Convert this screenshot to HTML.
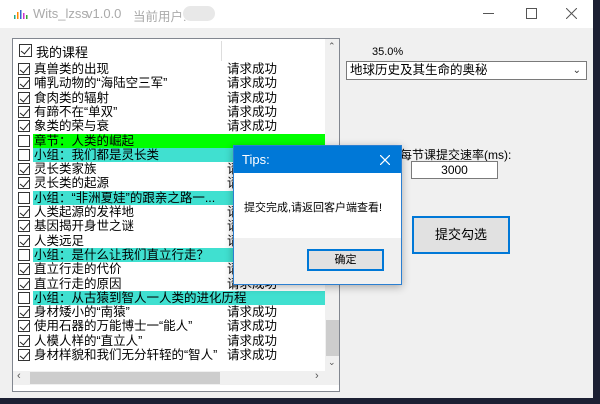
<!DOCTYPE html><html><head><meta charset="utf-8"><style>
*{margin:0;padding:0;box-sizing:border-box}
body{width:600px;height:404px;background:#1c2033;position:relative;overflow:hidden;font-family:"Liberation Sans","Noto Sans CJK SC",sans-serif;font-size:12px;color:#000}
.win{position:absolute;left:0;top:0;width:593px;height:398px;background:#f0f0f0}
.tb{position:absolute;left:0;top:0;width:593px;height:28px;background:#fff}
.abs{position:absolute;white-space:nowrap}
.list{position:absolute;left:12px;top:38px;width:328px;height:354px;border:1px solid #828790;background:#fff}
.cb{position:absolute;left:5px;width:12px;height:12px;border:1px solid #333;background:#fff}
.cb.c::after{content:"";position:absolute;left:3px;top:0px;width:4px;height:8px;border:solid #222;border-width:0 1.5px 1.5px 0;transform:rotate(40deg)}
.bar{position:absolute;left:20px;width:292px;height:14px;line-height:14px;padding-left:1px;font-size:12.5px}
.st{position:absolute;left:214px;font-size:12.5px;line-height:14px}
</style></head><body>
<div class="win">
<div class="tb">
 <svg class="abs" style="left:14px;top:10px" width="14" height="10"><rect x="0" y="5" width="1.5" height="4" fill="#2a8"/><rect x="3" y="2" width="1.5" height="7" fill="#f80"/><rect x="6" y="0" width="1.5" height="9" fill="#36c"/><rect x="9" y="3" width="1.5" height="6" fill="#c3c"/><rect x="12" y="5" width="1.5" height="4" fill="#3a3"/></svg>
 <div class="abs" style="left:33px;top:6px;font-size:13px;color:#aaa">Wits_lzss</div>
 <div class="abs" style="left:86px;top:6px;font-size:13px;color:#aaa">v1.0.0</div>
 <div class="abs" style="left:133px;top:6px;font-size:12.5px;color:#aaa">当前用户:</div>
 <div class="abs" style="left:183px;top:6px;width:32px;height:15px;border-radius:8px;background:#e8e8e8"></div>
 <div class="abs" style="left:483px;top:13px;width:11px;height:1px;background:#555"></div>
 <div class="abs" style="left:526px;top:8px;width:11px;height:11px;border:1px solid #555"></div>
 <svg class="abs" style="left:566px;top:8px" width="11" height="11"><path d="M0 0L11 11M11 0L0 11" stroke="#555" stroke-width="1"/></svg>
</div>
<div class="list">
 <div class="cb c" style="left:6px;top:5px;width:13px;height:13px"></div>
 <div class="abs" style="left:23px;top:3px;font-size:13px">我的课程</div>
 <div class="abs" style="left:208px;top:2px;width:1px;height:20px;background:#ddd"></div>
 <div id="rows"></div>
 <div class="abs" style="left:312px;top:0;width:14px;height:332px;background:#f0f0f0"></div>
 <div class="abs" style="left:315px;top:2px;font-size:9px;color:#555">⌃</div>
 <div class="abs" style="left:313px;top:281px;width:13px;height:36px;background:#cdcdcd"></div>
 <div class="abs" style="left:315px;top:318px;font-size:9px;color:#555">⌄</div>
 <div class="abs" style="left:0;top:332px;width:326px;height:14px;background:#f0f0f0"></div>
 <div class="abs" style="left:17px;top:333px;width:190px;height:12px;background:#cdcdcd"></div>
 <div class="abs" style="left:4px;top:331px;font-size:11px;color:#555">‹</div>
 <div class="abs" style="left:302px;top:331px;font-size:11px;color:#555">›</div>
</div>
<div class="abs" style="left:372px;top:46px;font-size:11px">35.0%</div>
<div class="abs" style="left:346px;top:61px;width:241px;height:19px;border:1px solid #7a7a7a;background:#fff;font-size:12.5px;line-height:17px;padding-left:3px">地球历史及其生命的奥秘<span style="position:absolute;right:5px;top:0;font-size:10px;color:#333">⌄</span></div>
<div class="abs" style="left:400px;top:146px;font-size:12px">每节课提交速率(ms):</div>
<div class="abs" style="left:411px;top:161px;width:87px;height:18px;border:1px solid #7a7a7a;background:#fff;text-align:center;font-size:12px;line-height:16px">3000</div>
<div class="abs" style="left:412px;top:216px;width:98px;height:38px;border:2px solid #0078d7;background:#e1e1e1;text-align:center;line-height:34px;font-size:13px">提交勾选</div>
</div>
<div class="abs" style="left:233px;top:145px;width:169px;height:140px;border:1px solid #2b7fd1;background:#fff;box-shadow:0 2px 8px rgba(0,0,0,.3)">
 <div style="height:27px;background:#0078d7;color:#fff;font-size:13px;line-height:27px;padding-left:8px;position:relative">Tips:<svg style="position:absolute;right:11px;top:9px" width="10" height="10"><path d="M0 0L10 10M10 0L0 10" stroke="#fff" stroke-width="1.2"/></svg></div>
 <div class="abs" style="left:10px;top:53px;font-size:11px">提交完成,请返回客户端查看!</div>
 <div class="abs" style="left:0;top:92px;width:167px;height:46px;background:#f0f0f0"></div>
 <div class="abs" style="left:73px;top:103px;width:77px;height:22px;border:2px solid #0078d7;background:#e1e1e1;text-align:center;line-height:18px;font-size:11px">确定</div>
</div>
<script>
var R=[["c","真兽类的出现",1],["c","哺乳动物的“海陆空三军”",1],["c","食肉类的辐射",1],["c","有蹄不在“单双”",1],["c","象类的荣与衰",1],["g","章节：人类的崛起"],["t","小组：我们都是灵长类"],["c","灵长类家族",1],["c","灵长类的起源",1],["t","小组：“非洲夏娃”的跟亲之路一..."],["c","人类起源的发祥地",1],["c","基因揭开身世之谜",1],["c","人类远足",1],["t","小组：是什么让我们直立行走？"],["c","直立行走的代价",1],["c","直立行走的原因",1],["t","小组：从古猿到智人一人类的进化历程"],["c","身材矮小的“南猿”",1],["c","使用石器的万能博士一“能人”",1],["c","人模人样的“直立人”",1],["c","身材样貌和我们无分轩轾的“智人”",1]];
var h="";R.forEach(function(r,i){var y=23+i*14.3;
if(r[0]=="c"){h+='<div class="cb c" style="top:'+(y+1)+'px"></div><div class="abs" style="left:21px;top:'+y+'px;font-size:12.5px;line-height:14px">'+r[1]+'</div><div class="st" style="top:'+y+'px">请求成功</div>';}
else{h+='<div class="cb" style="top:'+(y+1)+'px"></div><div class="bar" style="top:'+y+'px;background:'+(r[0]=="g"?"#00ff00":"#40e0d0")+'">'+r[1]+'</div>';}});
document.getElementById("rows").innerHTML=h;
</script>
</body></html>
